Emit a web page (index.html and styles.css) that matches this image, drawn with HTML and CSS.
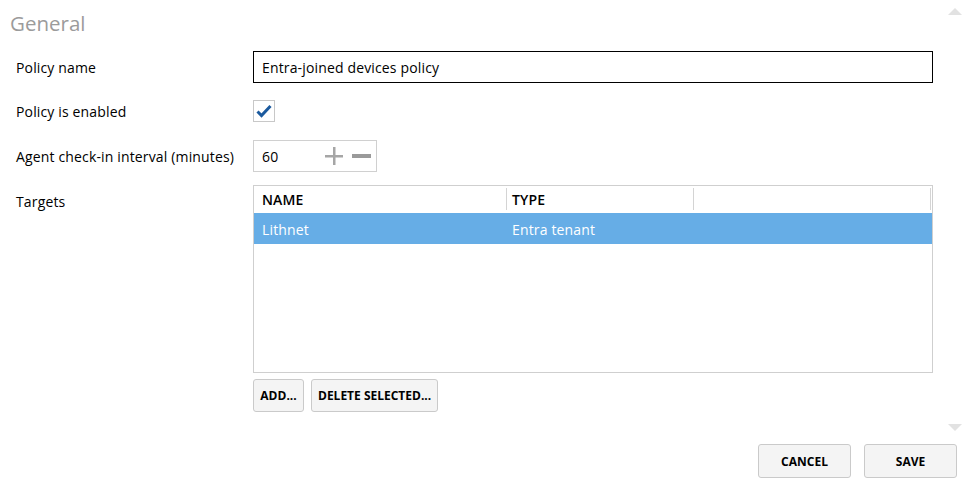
FILE: index.html
```html
<!DOCTYPE html>
<html lang="en">
<head>
<meta charset="utf-8">
<title>General</title>
<link rel="stylesheet" href="styles.css">
</head>
<body>
<div class="page">
  <div class="top">
    <div class="content">
      <h1 class="title">General</h1>
      <div class="row row-name">
        <div class="label">Policy name</div>
        <div class="field"><input class="text-input" type="text" value="Entra-joined devices policy"></div>
      </div>
      <div class="row row-check">
        <div class="label">Policy is enabled</div>
        <div class="field">
          <span class="checkbox">
            <svg width="16" height="14" viewBox="0 0 16 14"><path d="M1.5 7.5 L5.5 11.5 L14.5 2" fill="none" stroke="#1b5a9e" stroke-width="3" stroke-linejoin="miter"/></svg>
          </span>
        </div>
      </div>
      <div class="row row-num">
        <div class="label">Agent check-in interval (minutes)</div>
        <div class="field">
          <div class="spinner">
            <span class="spin-value">60</span>
            <span class="spin-btns">
              <svg class="plus" width="18" height="18" viewBox="0 0 18 18"><rect x="8" y="0" width="2.5" height="18" fill="#a6a6a6"/><rect x="0" y="8" width="18" height="2.5" fill="#a6a6a6"/></svg>
              <svg class="minus" width="19" height="5" viewBox="0 0 19 5"><rect x="0" y="0" width="19" height="4" fill="#9a9a9a"/></svg>
            </span>
          </div>
        </div>
      </div>
      <div class="row row-targets">
        <div class="label label-top">Targets</div>
        <div class="field">
          <div class="table">
            <div class="thead">
              <div class="th th-name">NAME</div>
              <div class="th th-type">TYPE</div>
              <div class="th th-rest"></div>
            </div>
            <div class="tr selected">
              <div class="td td-name">Lithnet</div>
              <div class="td td-type">Entra tenant</div>
            </div>
          </div>
          <div class="table-actions">
            <button class="btn btn-add">ADD...</button>
            <button class="btn">DELETE SELECTED...</button>
          </div>
        </div>
      </div>
    </div>
    <div class="scrollbar">
      <span class="arrow arrow-up"></span>
      <span class="arrow arrow-down"></span>
    </div>
  </div>
  <div class="footer">
    <button class="btn btn-wide">CANCEL</button>
    <button class="btn btn-wide">SAVE</button>
  </div>
</div>
</body>
</html>
```
FILE: styles.css
```css
* { box-sizing: border-box; }
html, body { margin: 0; padding: 0; background: #fff; }
body {
  font-family: "Open Sans", "Noto Sans", sans-serif;
  font-size: 14px;
  letter-spacing: 0.15px;
  color: #000;
  width: 973px;
  height: 491px;
  overflow: hidden;
}
.page { display: flex; flex-direction: column; }
.top { display: flex; height: 440px; }
.content { flex: 1; padding-right: 7px; }
.title {
  margin: 0;
  padding: 9px 0 0 10px;
  height: 51px;
  font-size: 20.5px;
  font-weight: normal;
  letter-spacing: 0;
  color: #9b9b9b;
  line-height: 28px;
}
.row { display: flex; align-items: center; }
.label { width: 253px; padding-left: 16px; flex: none; padding-top: 1px; }
.field { flex: 1; }
.row-name { height: 32px; }
.row-check { margin-top: 17px; height: 22px; }
.row-num { margin-top: 18px; height: 32px; }
.row-targets { margin-top: 13px; align-items: flex-start; }
.label-top { padding-top: 7px; }

.text-input {
  width: 100%;
  height: 32px;
  border: 1px solid #000;
  padding: 1px 8px 0;
  font: inherit;
  letter-spacing: inherit;
  color: #000;
  outline: none;
}
.checkbox {
  display: flex;
  align-items: center;
  justify-content: center;
  width: 22px;
  height: 22px;
  border: 1px solid #c8c8c8;
}
.spinner {
  width: 124px;
  height: 32px;
  border: 1px solid #d0d0d0;
  display: flex;
  align-items: center;
  padding-left: 8px;
}
.spin-value { flex: 1; }
.spin-btns { display: flex; align-items: center; gap: 9px; padding-right: 5px; }

.table {
  height: 188px;
  border: 1px solid #cfcfcf;
}
.thead { display: flex; height: 27px; }
.th {
  font-weight: 600;
  padding-left: 8px;
  line-height: 28px;
  position: relative;
  text-transform: uppercase;
}
.th::after {
  content: "";
  position: absolute;
  right: 0;
  top: 2px;
  bottom: 3px;
  width: 1px;
  background: #d4d4d4;
}
.th-name { width: 253px; }
.th-type { width: 187px; padding-left: 5px; }
.th-rest { width: 237px; }
.tr { display: flex; height: 31px; align-items: center; padding-top: 1px; }
.selected { background: #66ade6; color: #fff; }
.td-name { width: 253px; padding-left: 8px; }
.td-type { padding-left: 5px; }

.table-actions { display: flex; gap: 7px; margin-top: 6px; }
.btn {
  font-family: inherit;
  font-size: 12px;
  font-weight: 700;
  letter-spacing: 0;
  color: #000;
  background: #f4f4f4;
  border: 1px solid #cacaca;
  border-radius: 3px;
  height: 33px;
  padding: 0 6px;
  cursor: pointer;
}
.btn-add { width: 51px; padding: 0; }
.scrollbar {
  width: 33px;
  display: flex;
  flex-direction: column;
  justify-content: space-between;
  align-items: flex-start;
  padding: 8px 0 9px 8px;
}
.arrow { width: 0; height: 0; border-left: 7.5px solid transparent; border-right: 7.5px solid transparent; }
.arrow-up { border-bottom: 7px solid #e2e2e2; }
.arrow-down { border-top: 7px solid #e2e2e2; }

.footer {
  display: flex;
  justify-content: flex-end;
  gap: 13px;
  padding: 4px 16px 0 0;
}
.btn-wide { width: 93px; height: 34px; }
```
